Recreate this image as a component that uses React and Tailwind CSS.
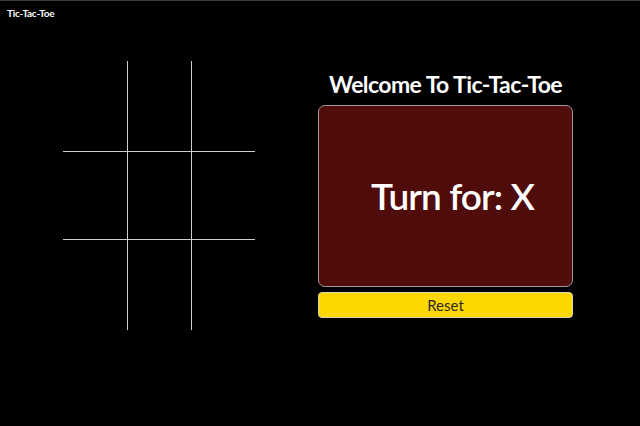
export default function App() {
  const cells = Array(9).fill("");
  const heights = ["h-[91px]", "h-[88px]", "h-[90px]"];

  return (
    <div className="h-[426px] w-[640px] bg-black text-white border-t border-[#3a3a3a] flex flex-col" style={{ fontFamily: "Lato, 'Noto Sans', sans-serif" }}>
      <div className="px-[7px] pt-[5px] text-[10px] font-bold leading-[14px] tracking-tight">Tic-Tac-Toe</div>

      <div className="flex items-start pl-[63px] gap-[63px]">
        <div className="grid grid-cols-[65px_64px_63px] w-[192px] mt-[41px]">
          {cells.map((c, i) => (
            <div
              key={i}
              className={
                "border-[#cfcfcf] " +
                heights[Math.floor(i / 3)] + " " +
                (i % 3 !== 2 ? "border-r " : "") +
                (i < 6 ? "border-b" : "")
              }
            >
              {c}
            </div>
          ))}
        </div>

        <div className="w-[255px] flex flex-col items-center mt-[50px]">
          <h1 className="text-[23px] font-bold leading-[28px] mb-[7px] tracking-tight">Welcome To Tic-Tac-Toe</h1>
          <div className="w-full h-[182px] bg-[#500b0b] border border-[#9a9a9a] rounded-[7px] flex items-center justify-center">
            <span className="text-[37px] font-semibold pl-[14px] tracking-tight">Turn for: X</span>
          </div>
          <button className="mt-[5px] w-full h-[26px] bg-[#ffd700] border border-[#d8d8b0] rounded-[4px] text-[#2a2a2a] text-[15px] font-normal leading-none">
            Reset
          </button>
        </div>
      </div>
    </div>
  );
}
